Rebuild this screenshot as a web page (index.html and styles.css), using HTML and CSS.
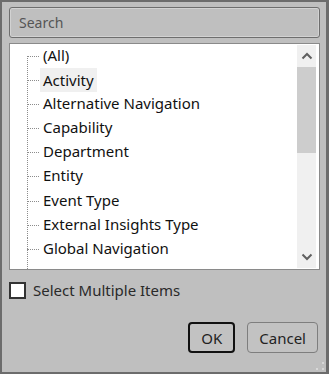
FILE: index.html
```html
<!DOCTYPE html>
<html lang="en">
<head>
    <meta charset="UTF-8">
    <title>Filter</title>
    <link rel="stylesheet" href="styles.css">
</head>
<body>

<div class="dialog">
    <div class="search">Search</div>

    <div class="listbox">
        <ul class="tree">
            <li class="first">(All)</li>
            <li><span class="hover">Activity</span></li>
            <li>Alternative Navigation</li>
            <li>Capability</li>
            <li>Department</li>
            <li>Entity</li>
            <li>Event Type</li>
            <li>External Insights Type</li>
            <li class="last">Global Navigation</li>
        </ul>
        <div class="scrollbar">
            <div class="arrow">
                <svg width="12" height="8" viewBox="0 0 12 8"><path d="M1.5 6.5 L6 2 L10.5 6.5" fill="none" stroke="#606060" stroke-width="2"/></svg>
            </div>
            <div class="track">
                <div class="thumb"></div>
            </div>
            <div class="arrow">
                <svg width="12" height="8" viewBox="0 0 12 8"><path d="M1.5 1.5 L6 6 L10.5 1.5" fill="none" stroke="#606060" stroke-width="2"/></svg>
            </div>
        </div>
    </div>

    <label class="check">
        <span class="box"></span>
        Select Multiple Items
    </label>

    <div class="buttons">
        <button class="btn default">OK</button>
        <button class="btn">Cancel</button>
    </div>

    <svg class="grip" width="10" height="10" viewBox="0 0 10 10">
        <rect x="7" y="1" width="2" height="2" fill="#d8d8d8"/>
        <rect x="7" y="7" width="2" height="2" fill="#d8d8d8"/>
        <rect x="1" y="7" width="2" height="2" fill="#d8d8d8"/>
    </svg>
</div>

</body>
</html>
```

FILE: styles.css
```css
body {
    margin: 0;
    font-family: "Noto Sans", "Open Sans", sans-serif;
    font-size: 15px;
}
.dialog {
    position: relative;
    box-sizing: border-box;
    width: 329px;
    height: 374px;
    background: #bfbfbf;
    border: 2px solid #6c6c6c;
    border-right-width: 3px;
    padding: 5px 6px 0 7px;
    display: flex;
    flex-direction: column;
}
.search {
    box-sizing: border-box;
    height: 31px;
    border: 1px solid #6e6e6e;
    box-shadow: inset 0 0 0 1px #d2d2d2;
    border-radius: 3px;
    padding: 4px 9px;
    color: #555;
    font-size: 14px;
    line-height: 21px;
}
.listbox {
    box-sizing: border-box;
    margin-top: 5px;
    height: 227px;
    background: #fff;
    border: 1px solid #8a8a8a;
    display: flex;
    overflow: hidden;
}
.tree {
    flex: 1;
    list-style: none;
    margin: 0;
    padding: 0 0 0 33px;
    color: #111;
}
.tree li {
    position: relative;
    height: 24.1px;
    line-height: 23px;
    white-space: nowrap;
}
.tree li::before {
    content: "";
    position: absolute;
    left: -16px;
    top: 12px;
    width: 12px;
    border-top: 1px dotted #8c8c8c;
}
.tree li::after {
    content: "";
    position: absolute;
    left: -16px;
    top: 0;
    height: 25px;
    border-left: 1px dotted #8c8c8c;
}
.tree li.first::after {
    top: 12px;
    height: 13px;
}
.tree li.last::after {
    height: 40px;
}
.hover {
    display: inline-block;
    background: #f0f0f0;
    padding: 0 3px;
    margin-left: -3px;
    line-height: 24px;
}
.scrollbar {
    width: 19px;
    margin: 1px 3px 1px 0;
    background: #f0f0f0;
    display: flex;
    flex-direction: column;
}
.arrow {
    height: 22px;
    display: flex;
    align-items: center;
    justify-content: center;
}
.track {
    flex: 1;
}
.thumb {
    height: 86px;
    background: #cdcdcd;
}
.check {
    display: flex;
    align-items: center;
    gap: 7px;
    margin-top: 10px;
    color: #2a2a2a;
    font-size: 15px;
}
.box {
    box-sizing: border-box;
    width: 17px;
    height: 17px;
    background: #fff;
    border: 2px solid #333;
}
.buttons {
    display: flex;
    justify-content: flex-end;
    gap: 12px;
    margin-top: 22px;
    padding-right: 2px;
}
.btn {
    box-sizing: border-box;
    height: 31px;
    min-width: 47px;
    padding: 0 11px;
    background: #c2c2c2;
    border: 1px solid #7e7e7e;
    border-radius: 4px;
    font-family: inherit;
    font-size: 15px;
    color: #222;
}
.btn.default {
    border: 2px solid #111;
}
.grip {
    position: absolute;
    right: 1px;
    bottom: 1px;
}
```
